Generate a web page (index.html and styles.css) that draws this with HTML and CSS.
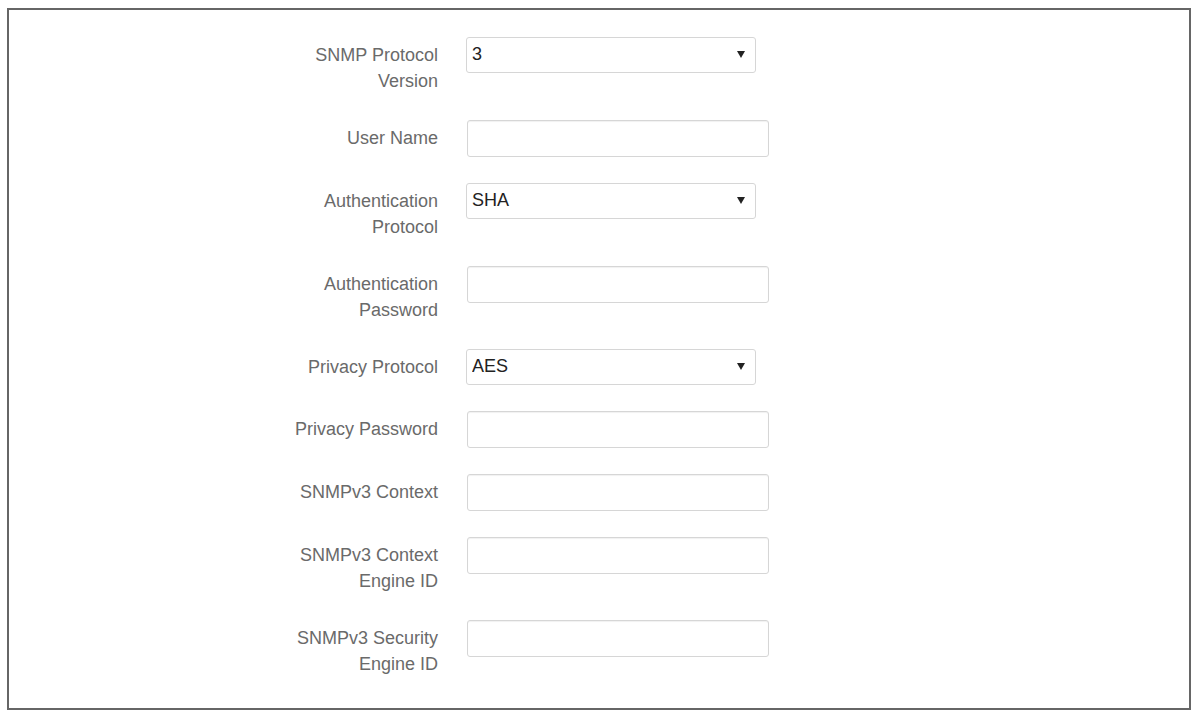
FILE: index.html
```html
<!DOCTYPE html>
<html lang="en">
<head>
  <meta charset="UTF-8">
  <meta name="viewport" content="width=device-width, initial-scale=1.0">
  <title>SNMP Settings</title>
  <link rel="stylesheet" href="styles.css">
</head>
<body>
  <div class="frame">
    <form class="snmp-form">
      <!-- Protocol version -->
      <div class="row">
        <label for="version">SNMP Protocol Version</label>
        <div class="select-wrap">
          <select id="version">
            <option>3</option>
            <option>2c</option>
            <option>1</option>
          </select>
        </div>
      </div>

      <div class="row">
        <label for="user">User Name</label>
        <input id="user" type="text">
      </div>

      <!-- Authentication -->
      <div class="row">
        <label for="auth-proto">Authentication Protocol</label>
        <div class="select-wrap">
          <select id="auth-proto">
            <option>SHA</option>
            <option>MD5</option>
          </select>
        </div>
      </div>

      <div class="row">
        <label for="auth-pass">Authentication Password</label>
        <input id="auth-pass" type="password">
      </div>

      <!-- Privacy -->
      <div class="row">
        <label for="priv-proto">Privacy Protocol</label>
        <div class="select-wrap">
          <select id="priv-proto">
            <option>AES</option>
            <option>DES</option>
          </select>
        </div>
      </div>

      <div class="row">
        <label for="priv-pass">Privacy Password</label>
        <input id="priv-pass" type="password">
      </div>

      <!-- Context -->
      <div class="row">
        <label for="context">SNMPv3 Context</label>
        <input id="context" type="text">
      </div>

      <div class="row">
        <label for="context-engine">SNMPv3 Context Engine ID</label>
        <input id="context-engine" type="text">
      </div>

      <div class="row">
        <label for="security-engine">SNMPv3 Security Engine ID</label>
        <input id="security-engine" type="text">
      </div>
    </form>
  </div>
</body>
</html>
```

FILE: styles.css
```css
body {
  margin: 8px 2px 2px 7px;
  font-family: "Liberation Sans", Arial, sans-serif;
  background: #fff;
}
.frame {
  height: 702px;
  box-sizing: border-box;
  border: 2px solid #666;
  padding: 27px 0 0 279px;
}
.snmp-form {
  display: flex;
  flex-direction: column;
  gap: 26px;
}
.row {
  display: flex;
  align-items: flex-start;
  gap: 28px;
}
.row label {
  width: 150px;
  padding-top: 5px;
  font-size: 18px;
  line-height: 26px;
  color: #6a6a6a;
  text-align: right;
}
.row input {
  width: 302px;
  height: 37px;
  box-sizing: border-box;
  margin: 0 0 0 1px;
  border: 1px solid #d6d6d6;
  border-radius: 3px;
  box-shadow: inset 0 1px 1px rgba(0, 0, 0, 0.06);
  font-family: inherit;
  font-size: 18px;
  padding: 0 6px;
}
.select-wrap {
  position: relative;
}
.select-wrap select {
  appearance: none;
  -webkit-appearance: none;
  width: 290px;
  height: 36px;
  box-sizing: border-box;
  border: 1px solid #d6d6d6;
  border-radius: 3px;
  background: #fff;
  padding: 0 5px 3px;
  font-family: inherit;
  font-size: 18px;
  color: #222;
}
.select-wrap::after {
  content: "";
  position: absolute;
  right: 11px;
  top: 14px;
  border-left: 4px solid transparent;
  border-right: 4px solid transparent;
  border-top: 7px solid #222;
  pointer-events: none;
}
```
